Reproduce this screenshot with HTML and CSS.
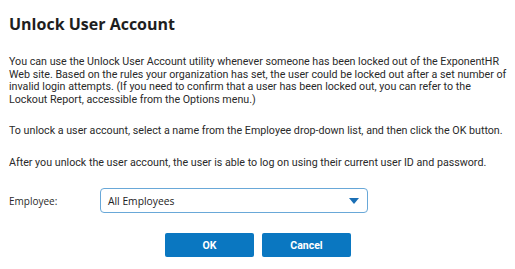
FILE: index.html
```html
<!DOCTYPE html>
<html>
<head>
<meta charset="utf-8">
<link rel="stylesheet" href="styles.css">
</head>
<body>
<div class="dialog">
  <h1 class="title">Unlock User Account</h1>
  <p class="para">You can use the Unlock User Account utility whenever someone has been locked out of the ExponentHR Web site. Based on the rules your organization has set, the user could be locked out after a set number of invalid login attempts. (If you need to confirm that a user has been locked out, you can refer to the Lockout Report, accessible from the Options menu.)</p>
  <p class="para">To unlock a user account, select a name from the Employee drop-down list, and then click the OK button.</p>
  <p class="para">After you unlock the user account, the user is able to log on using their current user ID and password.</p>
  <div class="field">
    <label class="label">Employee:</label>
    <div class="select">
      <span class="select-value">All Employees</span>
      <svg class="caret" width="10" height="6" viewBox="0 0 10 6"><path d="M0 0H10L5 6Z" fill="#1a6fb5"/></svg>
    </div>
  </div>
  <div class="actions">
    <button class="btn">OK</button>
    <button class="btn">Cancel</button>
  </div>
</div>
</body>
</html>
```
FILE: styles.css
```css
html, body { margin: 0; padding: 0; background: #fff; }
.dialog { padding: 12px 9px 0 9px; width: 498px; }
.title { font-family: "Open Sans", sans-serif; font-weight: 700; font-size: 16px; color: #1e1e1e; margin: 0 0 20px 0; line-height: 24px; }
.para { font-family: Roboto, sans-serif; font-size: 10.7px; line-height: 12.5px; color: #2a2a2a; margin: 0 0 19px 0; }
.field { display: flex; align-items: center; margin-top: 19px; }
.label { font-family: "Open Sans", sans-serif; font-size: 10px; color: #2a2a2a; width: 91px; }
.select { width: 268px; height: 25px; border: 1px solid #69a8d8; border-radius: 4px; display: flex; align-items: center; justify-content: space-between; padding: 0 8px 0 7px; box-sizing: border-box; }
.select-value { font-family: "Open Sans", sans-serif; font-size: 10.3px; color: #222; }
.actions { display: flex; gap: 8px; margin-top: 20px; margin-left: 156px; }
.btn { width: 89px; height: 24px; background: #0a77c1; border: none; border-radius: 2px; color: #fff; font-family: Roboto, sans-serif; font-weight: 700; font-size: 10.5px; }
```
